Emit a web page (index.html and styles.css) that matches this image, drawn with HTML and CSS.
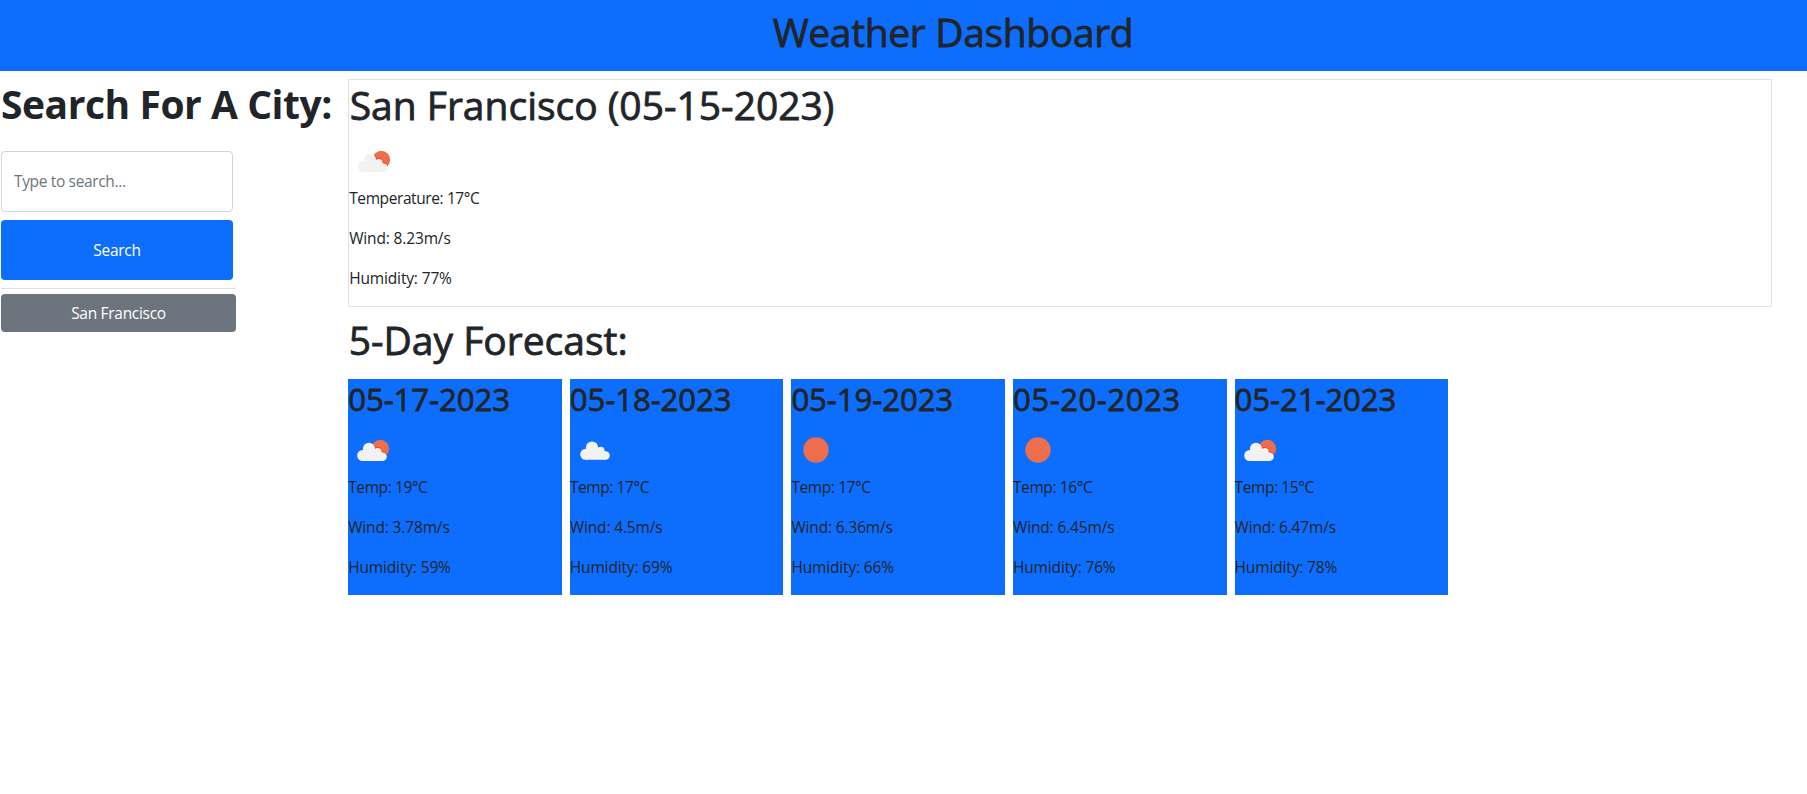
FILE: index.html
```html
<!DOCTYPE html>
<html lang="en">
<head>
<meta charset="utf-8">
<title>Weather Dashboard</title>
<link rel="stylesheet" href="styles.css">
</head>
<body>
<svg class="defs" width="0" height="0">
  <defs>
    <g id="cloud">
      <circle cx="14.7" cy="30.5" r="5.5"/>
      <circle cx="21" cy="23.8" r="6.1"/>
      <circle cx="29.8" cy="26.6" r="3.7"/>
      <circle cx="34.5" cy="31.7" r="4.3"/>
      <path d="M14.7 36V26H21L29.5 24.5V27.4H34.5V36Z"/>
    </g>
    <clipPath id="disc"><circle cx="32.3" cy="23.7" r="8.9"/></clipPath>
    <symbol id="few" viewBox="0 0 50 50">
      <circle cx="32.3" cy="23.7" r="8.9" fill="#ec6e4c"/>
      <g clip-path="url(#disc)"><use href="#cloud" fill="#e5502c" stroke="#e5502c" stroke-width="1.6"/></g>
      <use href="#cloud" fill="#f2f2f2"/>
    </symbol>
    <symbol id="cloudy" viewBox="0 0 50 50"><use href="#cloud" x="1" y="-1.2" fill="#f2f2f2"/></symbol>
    <symbol id="clear" viewBox="0 0 50 50"><circle cx="25" cy="25" r="12.7" fill="#ec6e4c"/></symbol>
  </defs>
</svg>
<header class="header"><h1 class="title">Weather Dashboard</h1></header>
<main class="layout">
  <aside class="sidebar">
    <h1 class="search-title">Search For A City:</h1>
    <form class="search">
      <input class="field" type="text" placeholder="Type to search...">
      <button class="btn primary" type="button">Search</button>
    </form>
    <div class="history"><button class="btn secondary" type="button">San Francisco</button></div>
  </aside>
  <section class="content">
    <div class="today">
      <h1 class="city">San Francisco (05-15-2023)</h1>
      <svg class="icon"><use href="#few"/></svg>
      <p class="temp">Temperature: 17°C</p>
      <p>Wind: 8.23m/s</p>
      <p>Humidity: 77%</p>
    </div>
    <h1 class="forecast-title">5-Day Forecast:</h1>
    <div class="cards">
      <article class="card"><h2>05-17-2023</h2><svg class="icon"><use href="#few"/></svg><p class="temp">Temp: 19°C</p><p>Wind: 3.78m/s</p><p>Humidity: 59%</p></article>
      <article class="card"><h2>05-18-2023</h2><svg class="icon"><use href="#cloudy"/></svg><p class="temp">Temp: 17°C</p><p>Wind: 4.5m/s</p><p>Humidity: 69%</p></article>
      <article class="card"><h2>05-19-2023</h2><svg class="icon"><use href="#clear"/></svg><p class="temp">Temp: 17°C</p><p>Wind: 6.36m/s</p><p>Humidity: 66%</p></article>
      <article class="card"><h2 class="wide">05-20-2023</h2><svg class="icon"><use href="#clear"/></svg><p class="temp">Temp: 16°C</p><p>Wind: 6.45m/s</p><p>Humidity: 76%</p></article>
      <article class="card"><h2>05-21-2023</h2><svg class="icon"><use href="#few"/></svg><p class="temp">Temp: 15°C</p><p>Wind: 6.47m/s</p><p>Humidity: 78%</p></article>
    </div>
  </section>
</main>
</body>
</html>
```
FILE: styles.css
```css
* { box-sizing: border-box; }
body { margin: 0; background: #fff; color: #212529; font: 400 15.5px/24px "Open Sans", "Noto Sans", sans-serif; letter-spacing: -.15px; }
h1, h2, p { margin: 0; }
h1 { height: 48px; font-size: 39px; line-height: 49px; font-weight: 400; letter-spacing: 0; -webkit-text-stroke: .8px #212529; }
.defs { display: block; height: 0; }
.header { height: 71px; padding-top: 7px; background: #0d6efd; }
.title { padding-left: 99px; text-align: center; letter-spacing: -.35px; }
.layout { display: flex; padding-top: 8px; }
.sidebar { width: 340px; padding-left: 1px; flex: none; }
.search-title { font-weight: 700; white-space: nowrap; letter-spacing: -.45px; -webkit-text-stroke: 0; }
.search { display: flex; flex-direction: column; gap: 8px; width: 232px; margin-top: 24px; }
.field { height: 61px; padding: 0 12px 1px; border: 1px solid #ced4da; border-radius: 4px; font: inherit; letter-spacing: -.35px; color: #212529; background: #fff; }
.field::placeholder { color: #6c757d; opacity: 1; }
.btn { border: 0; border-radius: 4px; color: #fff; font: inherit; letter-spacing: -.3px; }
.primary { height: 60px; background: #0d6efd; }
.history { width: 235px; margin-top: 8px; padding-top: 5px; border-top: 1px solid #dee2e6; }
.secondary { display: block; width: 100%; height: 38px; background: #6c757d; }
.content { width: 1424px; margin-left: 8.2px; }
.today { height: 228px; border: 1px solid #dee2e6; }
.icon { display: block; width: 50px; height: 50px; margin-top: 8px; }
p { margin-bottom: 16px; }
.temp { letter-spacing: -.4px; }
.city { padding-left: .5px; }
.forecast-title { margin: 8px 0 16px; padding-left: .5px; }
.cards { display: flex; gap: 8px; }
.card { width: 15%; height: 216px; background: #0d6efd; }
.card h2 { height: 38.4px; padding-top: 1px; font-size: 31.2px; line-height: 39px; font-weight: 400; letter-spacing: -.1px; -webkit-text-stroke: .8px #212529; }
.card h2.wide { letter-spacing: .5px; }
```
